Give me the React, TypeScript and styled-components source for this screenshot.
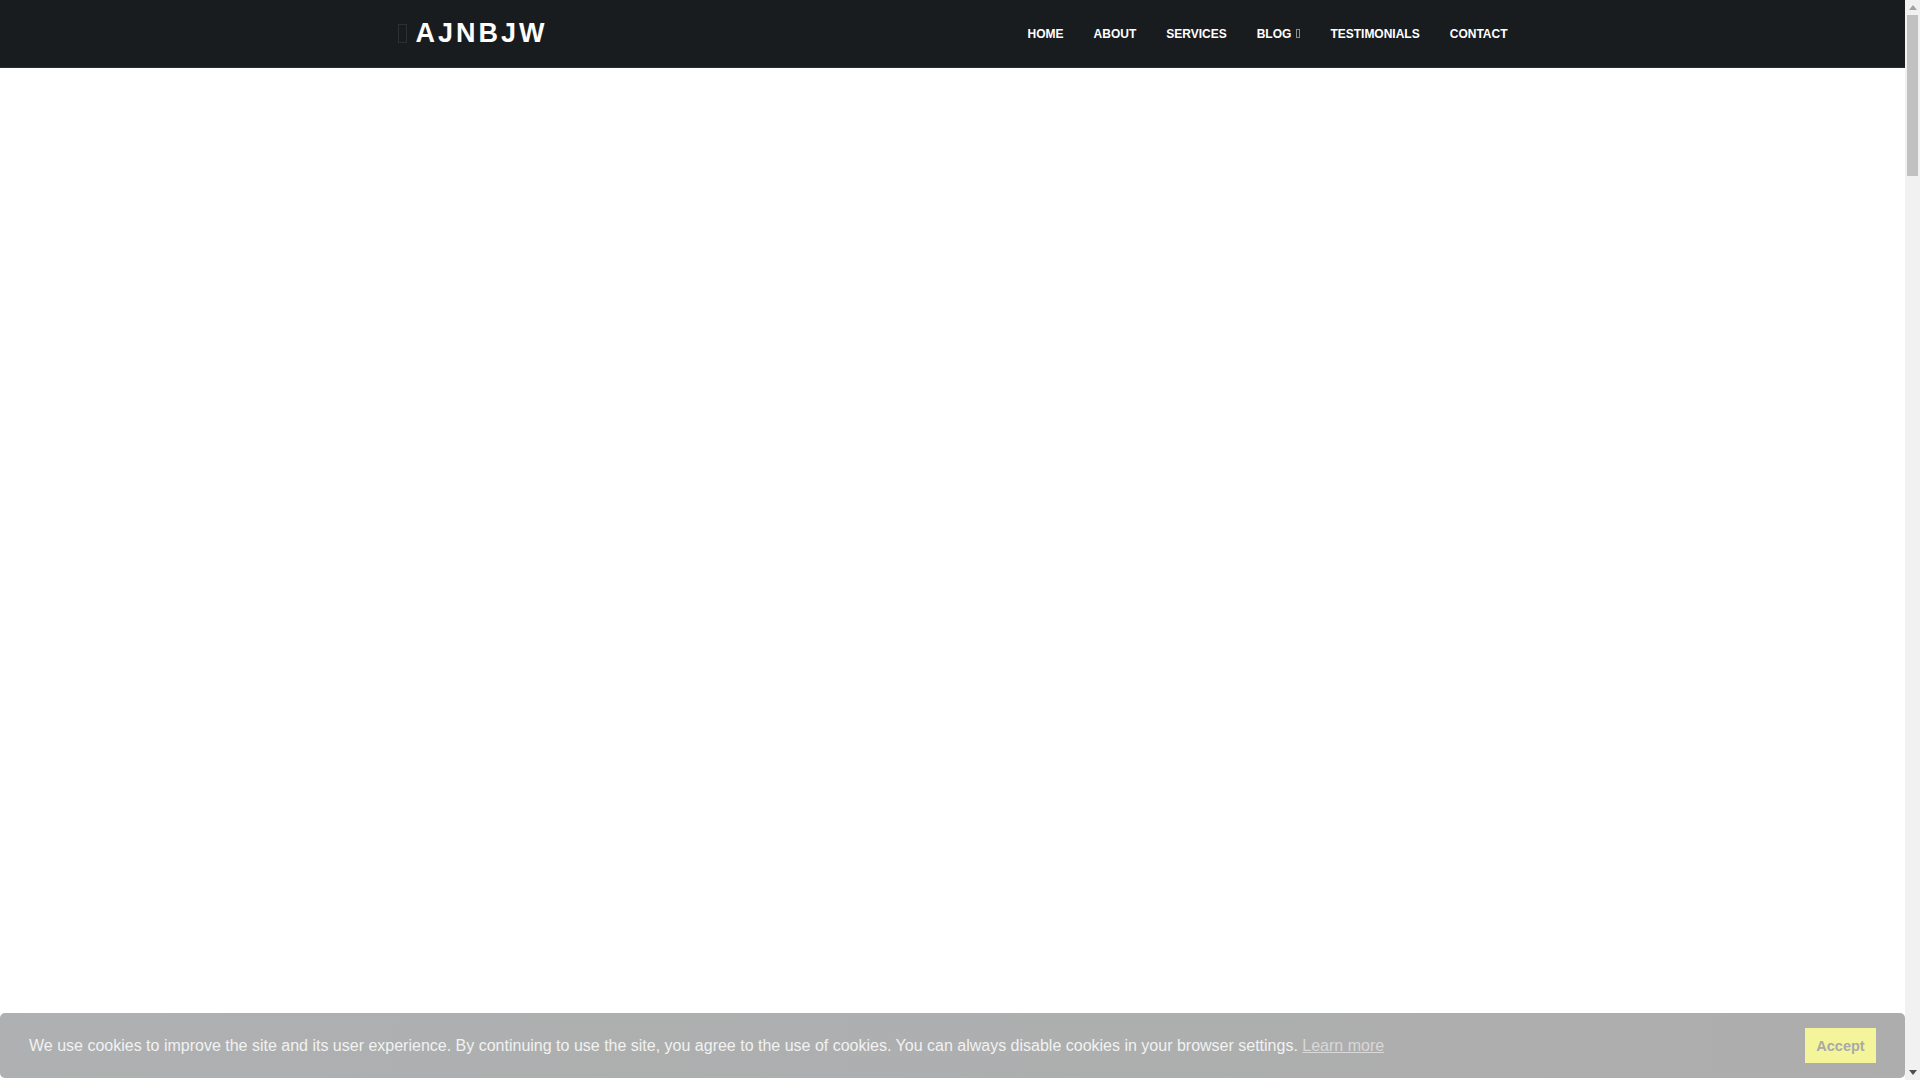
import React from "react"
import styled, { createGlobalStyle } from "styled-components"

const GlobalStyle = createGlobalStyle`
    html, body {
        margin: 0;
        padding: 0;
        height: 100%;
        overflow: hidden;
        background: #fff;
        font-family: "Liberation Sans", Arial, sans-serif;
    }
    * {
        box-sizing: border-box;
    }
`

const Frame = styled.div`
    display: flex;
    height: 100vh;
`

const Page = styled.div`
    position: relative;
    flex: 1;
    overflow: hidden;
    background: #fff;
`

// drawn rail standing in for the browser's scrollbar
const ScrollRail = styled.div`
    width: 15px;
    display: flex;
    flex-direction: column;
    align-items: center;
    background: #f1f1f1;
`

const RailButton = styled.div`
    height: 15px;
    width: 15px;
    display: flex;
    align-items: center;
    justify-content: center;
`

const RailThumb = styled.div`
    width: 11px;
    height: 161px;
    background: #c1c1c1;
`

const RailSpacer = styled.div`
    flex: 1;
`

const NavRoot = styled.header`
    height: 68px;
    background: #191c1f;
    border-bottom: 1px solid #2a2d31;
`

const NavContainer = styled.div`
    width: 1110px;
    height: 100%;
    margin: 0 auto;
    display: flex;
    align-items: center;
    justify-content: space-between;
`

const Brand = styled.a`
    display: flex;
    align-items: center;
    gap: 9px;
    color: #fff;
    text-decoration: none;
    font-size: 27px;
    font-weight: bold;
    letter-spacing: 3px;
    cursor: pointer;
`

const MissingGlyph = styled.span<{ $w: number; $h: number; $color: string }>`
    display: inline-block;
    width: ${p => p.$w}px;
    height: ${p => p.$h}px;
    border: 1px solid ${p => p.$color};
`

const NavList = styled.ul`
    list-style: none;
    margin: 0;
    padding: 0;
    display: flex;
    align-items: center;
    gap: 30px;
`

const NavLink = styled.a`
    display: flex;
    align-items: center;
    gap: 5px;
    color: #fff;
    font-size: 12px;
    font-weight: bold;
    text-transform: uppercase;
    text-decoration: none;
    cursor: pointer;
`

const CookieBar = styled.div`
    position: absolute;
    left: 0;
    right: 0;
    bottom: 2px;
    height: 65px;
    border-radius: 5px;
    background: linear-gradient(90deg, #aeb0b1 0%, #adadad 100%);
    display: flex;
    align-items: center;
    justify-content: space-between;
    padding: 0 29px;
    z-index: 200;
`

const CookieText = styled.p`
    margin: 0;
    color: #f2f2f2;
    font-size: 16px;
`

const LearnMore = styled.a`
    color: #d8d8d8;
    text-decoration: underline;
    cursor: pointer;
`

const AcceptButton = styled.button`
    width: 71px;
    height: 35px;
    border: none;
    background: #f4f59b;
    color: #a9a9a9;
    font-family: "Liberation Sans", Arial, sans-serif;
    font-size: 14.5px;
    font-weight: bold;
    cursor: pointer;
`

const links = ["Home", "About", "Services", "Blog", "Testimonials", "Contact"]

const App: React.FunctionComponent = () => {
    return <>
        <GlobalStyle />
        <Frame>
            <Page>
                <NavRoot>
                    <NavContainer>
                        <Brand>
                            <MissingGlyph $w={9} $h={19} $color="#2c2f33" />
                            AJNBJW
                        </Brand>
                        <NavList>
                            {links.map(l => (
                                <li key={l}>
                                    <NavLink>
                                        {l}
                                        {l === "Blog" && <MissingGlyph $w={4} $h={9} $color="#8a8c8e" />}
                                    </NavLink>
                                </li>
                            ))}
                        </NavList>
                    </NavContainer>
                </NavRoot>
                <CookieBar>
                    <CookieText>
                        We use cookies to improve the site and its user experience. By continuing to use the site, you agree to the use of cookies. You can always disable cookies in your browser settings. <LearnMore>Learn more</LearnMore>
                    </CookieText>
                    <AcceptButton>Accept</AcceptButton>
                </CookieBar>
            </Page>
            <ScrollRail>
                <RailButton>
                    <svg width="8" height="5" viewBox="0 0 8 5"><path d="M0 5 L4 0 L8 5 Z" fill="#a3a3a3" /></svg>
                </RailButton>
                <RailThumb />
                <RailSpacer />
                <RailButton>
                    <svg width="8" height="5" viewBox="0 0 8 5"><path d="M0 0 L4 5 L8 0 Z" fill="#505050" /></svg>
                </RailButton>
            </ScrollRail>
        </Frame>
    </>
}

export default App
